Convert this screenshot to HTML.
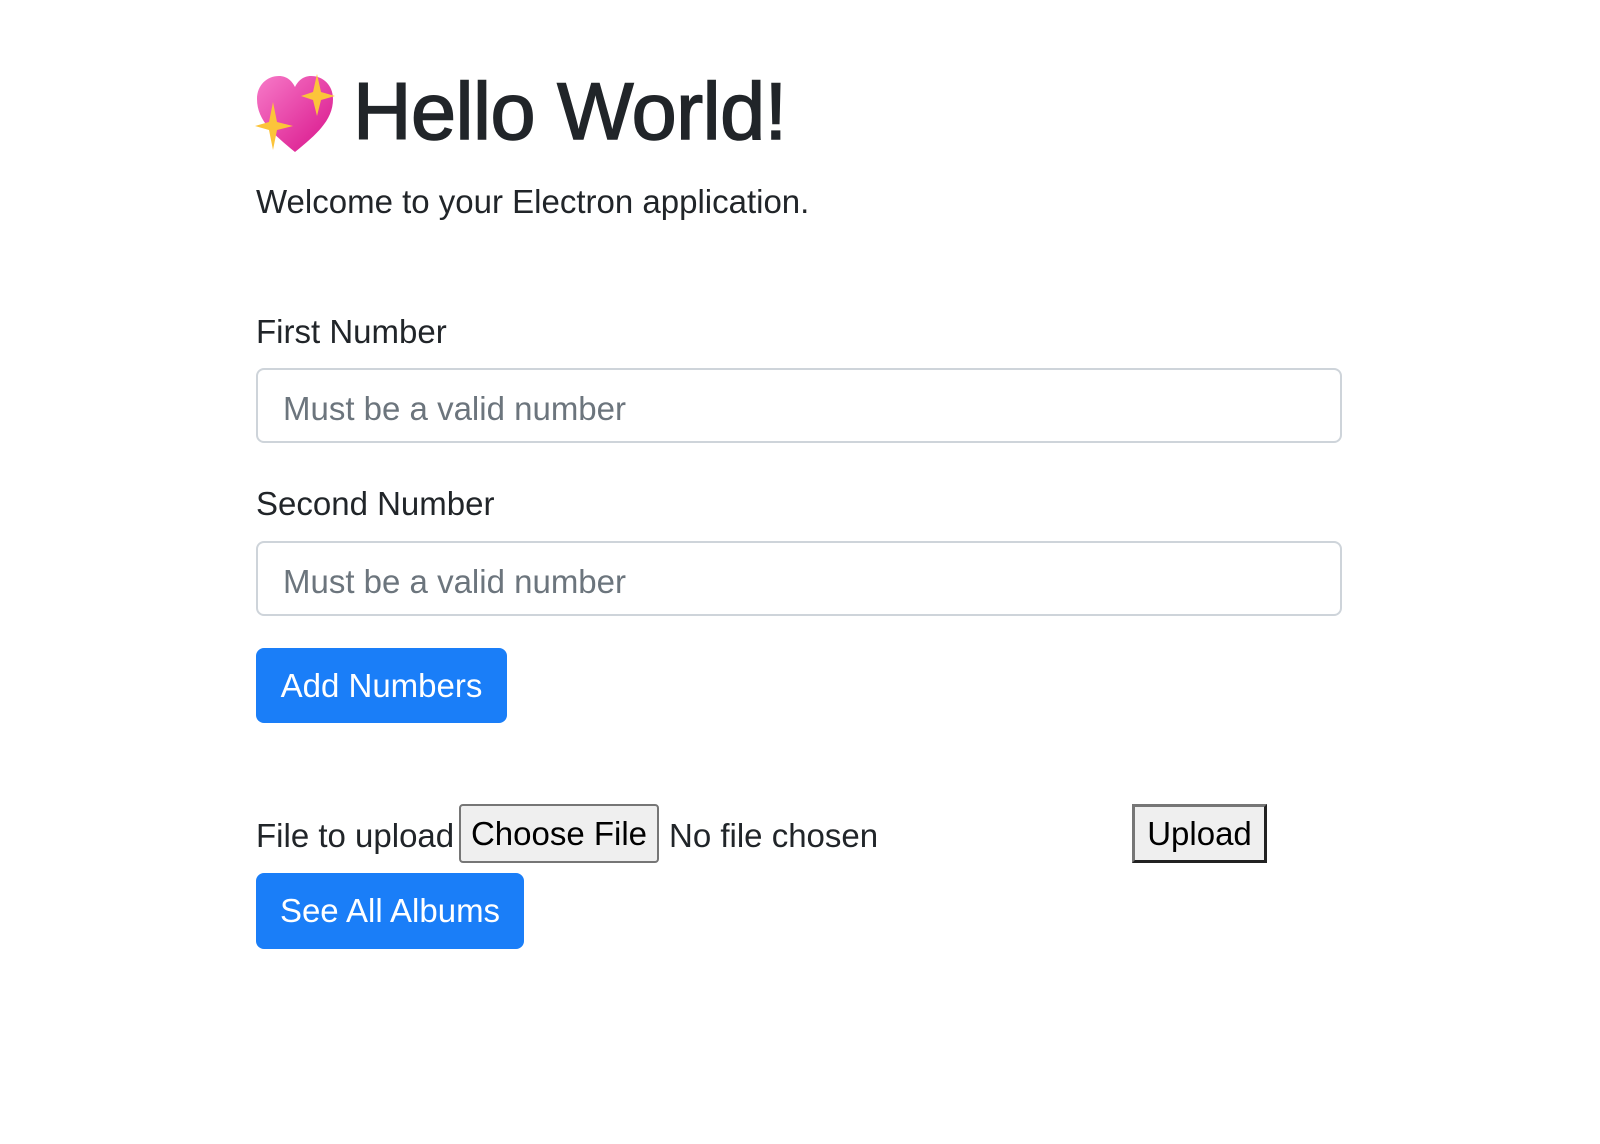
<!DOCTYPE html>
<html><head><meta charset="utf-8"><style>
body{margin:0;width:1600px;height:1144px;background:#fff;font-family:"Liberation Sans",Arial,sans-serif;color:#212529;position:relative;overflow:hidden}
.a{position:absolute;white-space:nowrap}
.t{font-size:33px;line-height:1}
.inp{position:absolute;left:256px;width:1086px;height:75px;border:2px solid #ced4da;border-radius:8px;box-sizing:border-box}
.inp span{position:absolute;left:25px;top:20px;font-size:33px;color:#6c757d}
.btn{position:absolute;background:#1a7ef8;color:#fff;border-radius:8px;font-size:33px;display:flex;align-items:center;justify-content:center}
</style></head><body>
<svg class="a" style="left:255px;top:72px" width="84" height="84" viewBox="0 0 84 84">
<defs><linearGradient id="g" x1="0" y1="0" x2="1" y2="1"><stop offset="0" stop-color="#f77ac8"/><stop offset="1" stop-color="#d8128a"/></linearGradient></defs>
<path d="M40 80 C18 62 2 48 2 27 C2 13 12 4 24 4 C32 4 37 9 40 15 C43 9 48 4 56 4 C68 4 78 13 78 27 C78 48 62 62 40 80Z" fill="url(#g)"/>
<path d="M62 2 L66 20 L80 24 L66 28 L62 44 L58 28 L46 24 L58 20Z" fill="#fcc43a"/>
<path d="M18 30 L22 50 L38 54 L22 58 L18 78 L14 58 L0 54 L14 50Z" fill="#fcc43a"/>
</svg>
<div class="a" style="left:353px;top:72px;font-size:81px;line-height:1;-webkit-text-stroke:1.5px #212529;letter-spacing:-0.5px">Hello World!</div>
<div class="a t" style="left:256px;top:185px">Welcome to your Electron application.</div>
<div class="a t" style="left:256px;top:315px">First Number</div>
<div class="inp" style="top:368px"><span>Must be a valid number</span></div>
<div class="a t" style="left:256px;top:487px">Second Number</div>
<div class="inp" style="top:541px"><span>Must be a valid number</span></div>
<div class="btn" style="left:256px;top:648px;width:251px;height:75px">Add Numbers</div>
<div class="a t" style="left:256px;top:819px">File to upload</div>
<div class="a t" style="left:459px;top:804px;width:200px;height:59px;box-sizing:border-box;border:2px solid #767676;border-radius:4px;background:#efefef;display:flex;align-items:center;justify-content:center;color:#000">Choose File</div>
<div class="a t" style="left:669px;top:819px">No file chosen</div>
<div class="a t" style="left:1132px;top:804px;width:135px;height:59px;box-sizing:border-box;border:3px solid;border-color:#767676 #222 #222 #767676;background:#efefef;display:flex;align-items:center;justify-content:center;color:#000">Upload</div>
<div class="btn" style="left:256px;top:873px;width:268px;height:76px">See All Albums</div>
</body></html>
